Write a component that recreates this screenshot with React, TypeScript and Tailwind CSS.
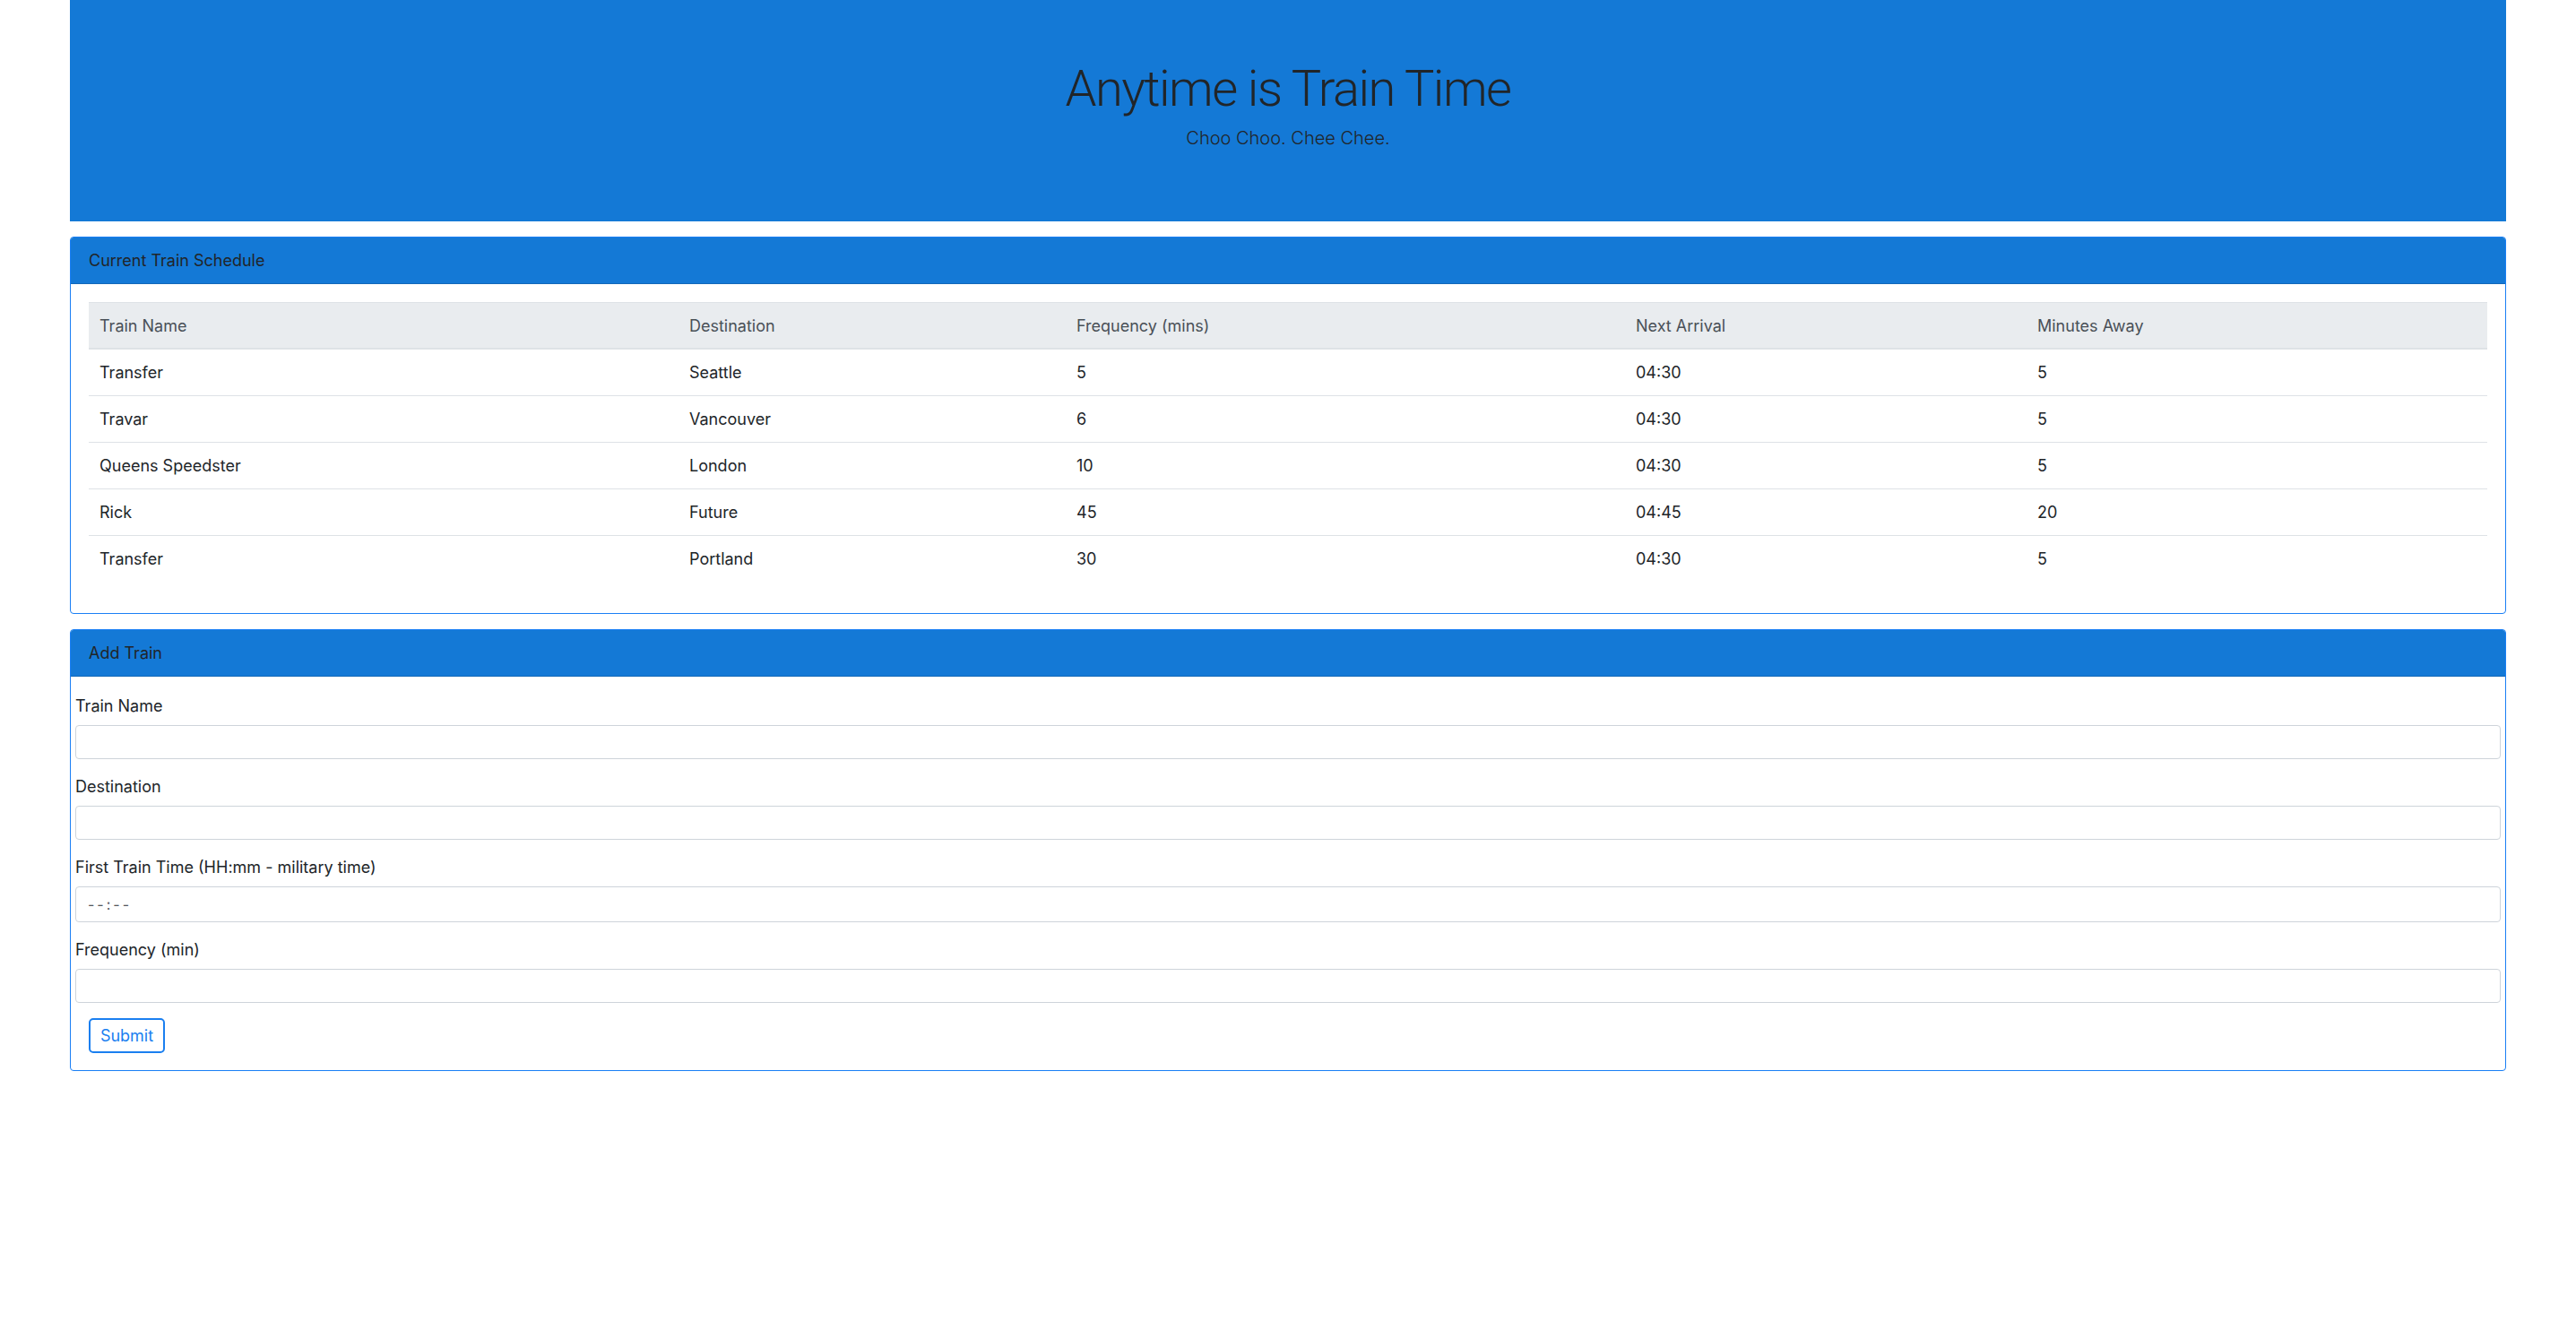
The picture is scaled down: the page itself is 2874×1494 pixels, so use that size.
import React from "react";

const rows = [
  ["Transfer", "Seattle", "5", "04:30", "5"],
  ["Travar", "Vancouver", "6", "04:30", "5"],
  ["Queens Speedster", "London", "10", "04:30", "5"],
  ["Rick", "Future", "45", "04:45", "20"],
  ["Transfer", "Portland", "30", "04:30", "5"],
];

function Field({ label, time }: { label: string; time?: boolean }) {
  return (
    <div className="flex flex-col">
      <label className="text-[18px] leading-[27px] text-[#212529] mb-[8px]">{label}</label>
      {time ? (
        <input
          type="text"
          placeholder="--:--"
          className="w-full h-[40px] border border-[#ced4da] rounded-[4px] pl-[13px] pr-[12px] text-[16px] tracking-[3px] text-[#495057] placeholder:text-[#55595e] bg-white outline-none"
        />
      ) : (
        <input
          type="text"
          className="w-full h-[38px] border border-[#ced4da] rounded-[4px] px-[12px] text-[16px] text-[#495057] bg-white outline-none"
        />
      )}
    </div>
  );
}

export default function App() {
  return (
    <div className="min-h-[1494px] bg-white font-['Inter',sans-serif] text-[#212529]">
      <div className="mx-[78px]">
        <div className="h-[247px] bg-[#1479d6] flex flex-col items-center pt-[66px]">
          <h1 className="font-['Roboto',sans-serif] text-[56px] font-light leading-[67px] tracking-[-1.5px]">Anytime is Train Time</h1>
          <p className="text-[20px] font-light leading-[30px] mt-[6px]">Choo Choo. Chee Chee.</p>
        </div>

        <div className="mt-[17px] border border-[#1a7ff5] rounded-[4px] overflow-hidden">
          <div className="h-[52px] bg-[#1479d6] border-b border-[#1268b8] px-[20px] flex items-center text-[18px] leading-[27px]">
            Current Train Schedule
          </div>
          <div className="p-[20px]">
            <table className="w-full table-fixed border-collapse mb-[15px] text-[18px] leading-[27px]">
              <colgroup>
                <col className="w-[658px]" />
                <col className="w-[432px]" />
                <col className="w-[624px]" />
                <col className="w-[448px]" />
                <col />
              </colgroup>
              <thead>
                <tr className="bg-[#e9ecef]">
                  {["Train Name", "Destination", "Frequency (mins)", "Next Arrival", "Minutes Away"].map((h) => (
                    <th
                      key={h}
                      className="text-left font-normal text-[#495057] px-[12px] pt-[12px] pb-[11px] border-t border-t-[#dee2e6] border-b-2 border-b-[#dee2e6]"
                    >
                      {h}
                    </th>
                  ))}
                </tr>
              </thead>
              <tbody>
                {rows.map((r, i) => (
                  <tr key={i}>
                    {r.map((c, j) => (
                      <td key={j} className={`px-[12px] py-[12px] ${i > 0 ? "border-t border-[#dee2e6]" : ""}`}>
                        {c}
                      </td>
                    ))}
                  </tr>
                ))}
              </tbody>
            </table>
          </div>
        </div>

        <div className="mt-[17px] border border-[#1a7ff5] rounded-[4px] overflow-hidden">
          <div className="h-[52px] bg-[#1479d6] border-b border-[#1268b8] px-[20px] flex items-center text-[18px] leading-[27px]">
            Add Train
          </div>
          <form className="px-[5px] pt-[19px] pb-[19px] flex flex-col gap-[17px]">
            <Field label="Train Name" />
            <Field label="Destination" />
            <Field label="First Train Time (HH:mm - military time)" time />
            <Field label="Frequency (min)" />
            <div>
              <button
                type="button"
                className="ml-[15px] w-[85px] h-[39px] border-2 border-[#1a7ff0] rounded-[5px] text-[#1a7ff0] text-[18px] leading-[27px] bg-white"
              >
                Submit
              </button>
            </div>
          </form>
        </div>
      </div>
    </div>
  );
}
